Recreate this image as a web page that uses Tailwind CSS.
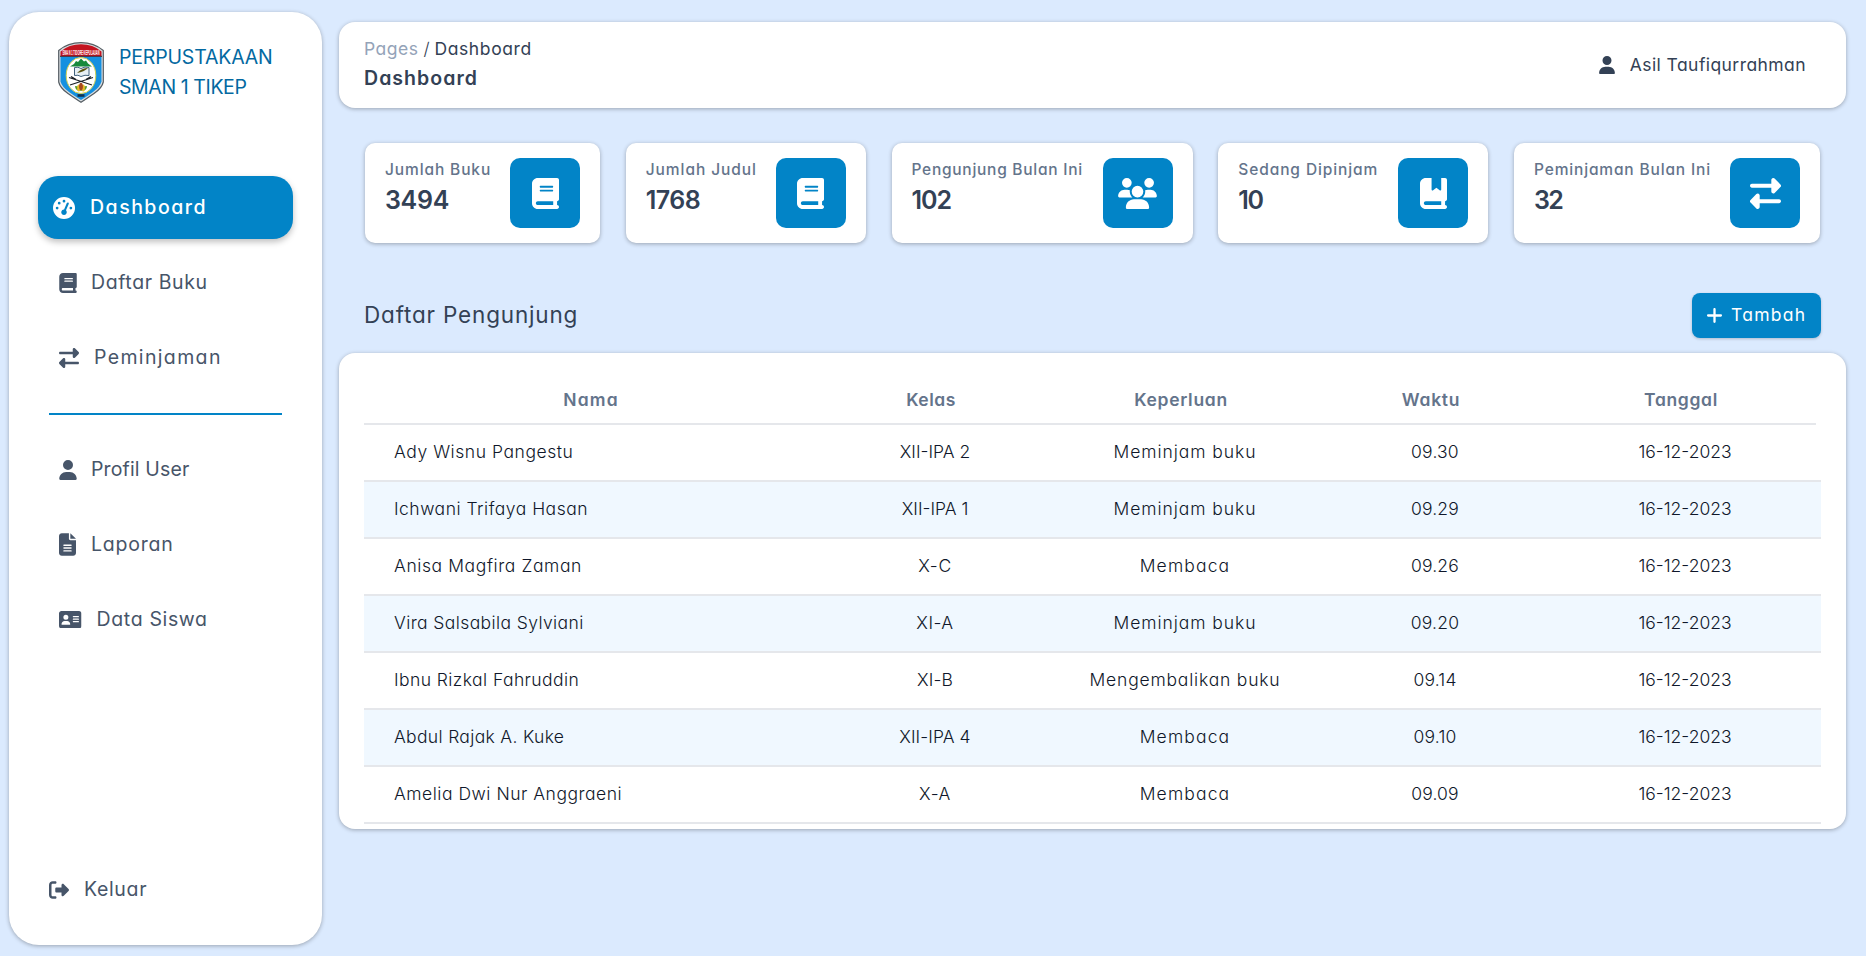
<!DOCTYPE html>
<html lang="id">
<head>
<meta charset="utf-8">
<title>Perpustakaan SMAN 1 TIKEP</title>
<script src="https://cdn.jsdelivr.net/npm/@tailwindcss/browser@4"></script>
</head>
<body class="h-[956px] w-[1866px] overflow-hidden bg-[#dbeafe] font-['Inter',sans-serif] [font-feature-settings:'cv11'] whitespace-nowrap text-[#334155]">
<svg class="hidden">
  <symbol id="user" viewBox="0 0 448 512"><path d="M224 256A128 128 0 1 0 224 0a128 128 0 1 0 0 256zm-45.7 48C79.8 304 0 383.8 0 482.3C0 498.7 13.3 512 29.7 512l388.6 0c16.4 0 29.7-13.3 29.7-29.7C448 383.8 368.2 304 269.7 304l-91.4 0z"/></symbol>
  <symbol id="book" viewBox="0 0 448 512"><path d="M96 0C43 0 0 43 0 96V416c0 53 43 96 96 96H384h32c17.7 0 32-14.3 32-32s-14.3-32-32-32V384c17.7 0 32-14.3 32-32V32c0-17.7-14.3-32-32-32H384 96zm0 384H352v64H96c-17.7 0-32-14.3-32-32s14.3-32 32-32zm32-240c0-8.8 7.2-16 16-16H336c8.8 0 16 7.2 16 16s-7.2 16-16 16H144c-8.8 0-16-7.2-16-16zm16 48H336c8.8 0 16 7.2 16 16s-7.2 16-16 16H144c-8.8 0-16-7.2-16-16s7.2-16 16-16z"/></symbol>
  <symbol id="bookmark" viewBox="0 0 448 512"><path d="M0 96C0 43 43 0 96 0h96V190.7c0 13.4 15.5 20.9 26 12.5L272 160l54 43.2c10.5 8.4 26 .9 26-12.5V0h32 32c17.7 0 32 14.3 32 32V352c0 17.7-14.3 32-32 32v64c17.7 0 32 14.3 32 32s-14.3 32-32 32H384 96c-53 0-96-43-96-96V96zM64 416c0 17.7 14.3 32 32 32H352V384H96c-17.7 0-32 14.3-32 32z"/></symbol>
  <symbol id="swap" viewBox="0 0 512 512"><path d="M32 96l320 0V32c0-12.9 7.8-24.6 19.8-29.6s25.7-2.2 34.9 6.9l96 96c6 6 9.4 14.1 9.4 22.6s-3.4 16.6-9.4 22.6l-96 96c-9.2 9.2-22.9 11.9-34.9 6.9s-19.8-16.6-19.8-29.6V160L32 160c-17.7 0-32-14.3-32-32s14.3-32 32-32zM480 352c17.7 0 32 14.3 32 32s-14.3 32-32 32H160v64c0 12.9-7.8 24.6-19.8 29.6s-25.7 2.2-34.9-6.9l-96-96c-6-6-9.4-14.1-9.4-22.6s3.4-16.6 9.4-22.6l96-96c9.2-9.2 22.9-11.9 34.9-6.9s19.8 16.6 19.8 29.6l0 64H480z"/></symbol>
  <symbol id="users" viewBox="0 0 640 512"><path d="M144 0a80 80 0 1 1 0 160A80 80 0 1 1 144 0zM512 0a80 80 0 1 1 0 160A80 80 0 1 1 512 0zM0 298.7C0 239.8 47.8 192 106.7 192h42.7c15.9 0 31 3.5 44.6 9.7c-1.3 7.2-1.9 14.7-1.9 22.3c0 38.2 16.8 72.5 43.3 96c-.2 0-.4 0-.7 0H21.3C9.6 320 0 310.4 0 298.7zM405.3 320c-.2 0-.4 0-.7 0c26.6-23.5 43.3-57.8 43.3-96c0-7.6-.7-15-1.9-22.3c13.6-6.3 28.7-9.7 44.6-9.7h42.7C592.2 192 640 239.8 640 298.7c0 11.8-9.6 21.3-21.3 21.3H405.3zM224 224a96 96 0 1 1 192 0 96 96 0 1 1-192 0zM128 485.3C128 411.7 187.7 352 261.3 352H378.7C452.3 352 512 411.7 512 485.3c0 14.7-11.9 26.7-26.7 26.7H154.7c-14.7 0-26.7-11.9-26.7-26.7z"/></symbol>
  <symbol id="file" viewBox="0 0 384 512"><path d="M64 0C28.7 0 0 28.7 0 64V448c0 35.3 28.7 64 64 64H320c35.3 0 64-28.7 64-64V160H256c-17.7 0-32-14.3-32-32V0H64zM256 0V128H384L256 0zM112 256H272c8.8 0 16 7.2 16 16s-7.2 16-16 16H112c-8.8 0-16-7.2-16-16s7.2-16 16-16zm0 64H272c8.8 0 16 7.2 16 16s-7.2 16-16 16H112c-8.8 0-16-7.2-16-16s7.2-16 16-16zm0 64H272c8.8 0 16 7.2 16 16s-7.2 16-16 16H112c-8.8 0-16-7.2-16-16s7.2-16 16-16z"/></symbol>
  <symbol id="card" viewBox="0 32 576 448"><path d="M64 32C28.7 32 0 60.7 0 96V416c0 35.3 28.7 64 64 64H512c35.3 0 64-28.7 64-64V96c0-35.3-28.7-64-64-64H64zm80 256h64c44.2 0 80 35.8 80 80c0 8.8-7.2 16-16 16H80c-8.8 0-16-7.2-16-16c0-44.2 35.8-80 80-80zm-32-96a64 64 0 1 1 128 0 64 64 0 1 1-128 0zm256-32H496c8.8 0 16 7.2 16 16s-7.2 16-16 16H368c-8.8 0-16-7.2-16-16s7.2-16 16-16zm0 64H496c8.8 0 16 7.2 16 16s-7.2 16-16 16H368c-8.8 0-16-7.2-16-16s7.2-16 16-16zm0 64H496c8.8 0 16 7.2 16 16s-7.2 16-16 16H368c-8.8 0-16-7.2-16-16s7.2-16 16-16z"/></symbol>
  <symbol id="exit" viewBox="0 0 512 512"><path d="M377.9 105.9L500.7 228.7c7.2 7.2 11.3 17.1 11.3 27.3s-4.1 20.1-11.3 27.3L377.9 406.1c-6.4 6.4-15 9.9-24 9.9c-18.7 0-33.9-15.2-33.9-33.9l0-62.1-128 0c-17.7 0-32-14.3-32-32l0-64c0-17.7 14.3-32 32-32l128 0 0-62.1c0-18.7 15.2-33.9 33.9-33.9c9 0 17.6 3.6 24 9.9zM160 96L96 96c-17.7 0-32 14.3-32 32l0 256c0 17.7 14.3 32 32 32l64 0c17.7 0 32 14.3 32 32s-14.3 32-32 32l-64 0c-53 0-96-43-96-96L0 128C0 75 43 32 96 32l64 0c17.7 0 32 14.3 32 32s-14.3 32-32 32z"/></symbol>
  <symbol id="plus" viewBox="16 48 416 416"><path d="M256 80c0-17.7-14.3-32-32-32s-32 14.3-32 32V224H48c-17.7 0-32 14.3-32 32s14.3 32 32 32H192V432c0 17.7 14.3 32 32 32s32-14.3 32-32V288H400c17.7 0 32-14.3 32-32s-14.3-32-32-32H256V80z"/></symbol>
  <symbol id="gauge" viewBox="0 0 512 512"><path d="M0 256a256 256 0 1 1 512 0A256 256 0 1 1 0 256zM288 96a32 32 0 1 0 -64 0 32 32 0 1 0 64 0zM256 416c35.3 0 64-28.7 64-64c0-17.4-6.9-33.1-18.1-44.6L366 161.7c5.3-12.1-.2-26.3-12.3-31.6s-26.3 .2-31.6 12.3L257.9 288c-.6 0-1.3 0-1.9 0c-35.3 0-64 28.7-64 64s28.7 64 64 64zM176 144a32 32 0 1 0 -64 0 32 32 0 1 0 64 0zM96 288a32 32 0 1 0 0-64 32 32 0 1 0 0 64zm352-32a32 32 0 1 0 -64 0 32 32 0 1 0 64 0z"/></symbol>
</svg>

<div class="flex h-full">
  <aside class="mt-3 ml-[9px] flex h-[933px] w-[313px] shrink-0 flex-col rounded-[30px] bg-white px-[29px] text-[19.5px] text-[#475569] shadow-[0_1px_4px_rgba(0,0,0,0.3)]">
    <div class="flex h-[164px] shrink-0 items-start gap-[15px] pt-[30px] pl-5 text-[#0369a1]">
      <svg class="h-[61px] w-[46px] shrink-0" viewBox="0 0 46 61">
        <path d="M.7 13V8.500Q10 .7 23 .7T45.300 8.500V40Q44 46 36 51.500T23 60.300Q18 57 10 51.500T.7 40z" fill="#d9dde0" stroke="#555d63" stroke-width="1.200"/>
        <path d="M2.500 14.500H43.500V39.500Q42 45 35 50T23 58Q18 55 11 50T2.500 39.500z" fill="#1490e0"/>
        <path d="M2.500 14V9.500Q11 2.300 23 2.300T43.500 9.500V14z" fill="#c41420"/>
        <path d="M2 14.300H44" stroke="#3a1d28" stroke-width="1"/>
        <text transform="scale(1 3)" x="4.500" y="4.250" textLength="37" lengthAdjust="spacingAndGlyphs" font-family="Liberation Sans" font-weight="700" font-size="2.700" fill="#fff">SMA N 1 TIDORE KEPULAUAN</text>
        <ellipse cx="23" cy="33.500" rx="14.800" ry="18" fill="#fff" stroke="#d5d24e" stroke-width="1"/>
        <path d="M12 24.500L16 22l2-3 2 1 3-3.500 3 3 2-1 2 3 4 3z" fill="#178a3c"/>
        <path d="M16.500 25.500Q20 24.500 23 26.500 27 24 31 25.500V33.500Q27 32.500 23 34.500 20 32.500 16.500 33.500z" fill="#e7f0f5" stroke="#41617c" stroke-width="1"/>
        <path d="M19 31Q24 26 30 26 26 30 19 31z" fill="#59520f"/>
        <path d="M11 35.500L34 43M35 35.500L12 43M13 34.500l5 3M33 34.500l-5 3" stroke="#1b2026" stroke-width="1.300"/>
        <path d="M17 44q5 0 6 5-6 0-6-5zM29 44q-5 0-6 5 6 0 6-5z" fill="#5a9a2a"/>
        <ellipse cx="20.800" cy="46" rx="1.700" ry="3.500" fill="#e7b928"/><ellipse cx="25.200" cy="46" rx="1.700" ry="3.500" fill="#e7b928"/>
        <ellipse cx="23" cy="44.500" rx="1.900" ry="3.800" fill="#a5481f"/>
        <path d="M19.500 53.500h7" stroke="#12324f" stroke-width="2.600"/>
      </svg>
      <div class="leading-[30px]"><div><span class="tracking-[-0.17px]">PERPUSTAKAAN</span></div><div><span class="tracking-[-0.4px]">SMAN 1 TIKEP</span></div></div>
    </div>
    <nav class="flex flex-1 flex-col">
      <a class="flex h-[63px] shrink-0 items-center gap-[15px] rounded-[20px] bg-[#0284c7] pl-[15px] font-medium text-white shadow-[0_3px_6px_rgba(0,0,0,0.25)]"><svg class="size-[22px] fill-current"><use href="#gauge"/></svg><span class="tracking-[1.5px]">Dashboard</span></a>
      <a class="mt-3 flex h-[63px] items-center gap-[14px] pl-[21px]"><svg class="h-5 w-[18px] fill-current"><use href="#book"/></svg><span class="tracking-[0.6px]">Daftar Buku</span></a>
      <a class="mt-3 flex h-[63px] items-center gap-[15px] pl-[21px]"><svg class="size-5 fill-current"><use href="#swap"/></svg><span class="tracking-[1.35px]">Peminjaman</span></a>
      <div class="mx-[11px] mt-6 mb-[23px] h-0.5 w-[233px] shrink-0 bg-[#0284c7]"></div>
      <a class="flex h-[63px] items-center gap-[14px] pl-[21px]"><svg class="h-5 w-[18px] fill-current"><use href="#user"/></svg><span class="tracking-[0.15px]">Profil User</span></a>
      <a class="mt-3 flex h-[63px] items-center gap-[15px] pl-[21px]"><svg class="h-[23px] w-[17px] fill-current"><use href="#file"/></svg><span class="tracking-[0.8px]">Laporan</span></a>
      <a class="mt-3 flex h-[63px] items-center gap-[15px] pl-[21px]"><svg class="h-[17.500px] w-[22.500px] fill-current"><use href="#card"/></svg><span class="tracking-[0.65px]">Data Siswa</span></a>
      <a class="mt-auto mb-6 flex h-[63px] items-center gap-[15px] pl-[11px]"><svg class="size-5 fill-current"><use href="#exit"/></svg><span class="tracking-[0.65px]">Keluar</span></a>
    </nav>
  </aside>

  <main class="mt-[22px] ml-[17px] w-[1507px]">
    <header class="flex h-[86px] items-center justify-between rounded-2xl bg-white pr-[40px] pl-[25px] shadow-[0_1px_4px_rgba(0,0,0,0.3)]">
      <div class="-mt-[3px]">
        <div class="text-[17.500px] leading-[28px]"><span class="tracking-[0.5px] text-[#94a3b8]">Pages</span> <span class="font-light">/</span> <span class="tracking-[0.62px]">Dashboard</span></div>
        <div class="text-[19.500px] leading-[30px] font-semibold"><span class="tracking-[1.05px]">Dashboard</span></div>
      </div>
      <div class="flex items-center gap-[15px] text-[17.500px]"><svg class="h-[18px] w-4 fill-current"><use href="#user"/></svg><span class="tracking-[0.43px]">Asil Taufiqurrahman</span></div>
    </header>

    <section class="mt-[35px] mr-[26px] ml-[26px] flex h-[100px] justify-between">
      <div class="flex w-[235px] justify-between rounded-[10px] bg-white px-5 py-[15px] shadow-[0_1px_4px_rgba(0,0,0,0.3)]"><div><div class="text-[15.500px] leading-6 font-medium text-[#64748b]"><span class="tracking-[0.88px]">Jumlah Buku</span></div><div class="text-[25px] leading-9 font-semibold"><span class="tracking-[-0.3px]">3494</span></div></div><div class="flex size-[70px] items-center justify-center rounded-[10px] bg-[#0284c7]"><svg class="h-[31px] w-[27px] fill-white"><use href="#book"/></svg></div></div>
      <div class="flex w-[240px] justify-between rounded-[10px] bg-white px-5 py-[15px] shadow-[0_1px_4px_rgba(0,0,0,0.3)]"><div><div class="text-[15.500px] leading-6 font-medium text-[#64748b]"><span class="tracking-[0.93px]">Jumlah Judul</span></div><div class="text-[25px] leading-9 font-semibold"><span class="tracking-[-0.5px]">1768</span></div></div><div class="flex size-[70px] items-center justify-center rounded-[10px] bg-[#0284c7]"><svg class="h-[31px] w-[27px] fill-white"><use href="#book"/></svg></div></div>
      <div class="flex w-[301px] justify-between rounded-[10px] bg-white px-5 py-[15px] shadow-[0_1px_4px_rgba(0,0,0,0.3)]"><div><div class="text-[15.500px] leading-6 font-medium text-[#64748b]"><span class="tracking-[0.73px]">Pengunjung Bulan Ini</span></div><div class="text-[25px] leading-9 font-semibold"><span class="tracking-[-1px]">102</span></div></div><div class="flex size-[70px] items-center justify-center rounded-[10px] bg-[#0284c7]"><svg class="h-[31px] w-[39px] fill-white"><use href="#users"/></svg></div></div>
      <div class="flex w-[270px] justify-between rounded-[10px] bg-white px-5 py-[15px] shadow-[0_1px_4px_rgba(0,0,0,0.3)]"><div><div class="text-[15.500px] leading-6 font-medium text-[#64748b]"><span class="tracking-[0.9px]">Sedang Dipinjam</span></div><div class="text-[25px] leading-9 font-semibold"><span class="tracking-[-1.2px]">10</span></div></div><div class="flex size-[70px] items-center justify-center rounded-[10px] bg-[#0284c7]"><svg class="h-[31px] w-[27px] fill-white"><use href="#bookmark"/></svg></div></div>
      <div class="flex w-[306px] justify-between rounded-[10px] bg-white px-5 py-[15px] shadow-[0_1px_4px_rgba(0,0,0,0.3)]"><div><div class="text-[15.500px] leading-6 font-medium text-[#64748b]"><span class="tracking-[0.84px]">Peminjaman Bulan Ini</span></div><div class="text-[25px] leading-9 font-semibold"><span class="tracking-[-1.7px]">32</span></div></div><div class="flex size-[70px] items-center justify-center rounded-[10px] bg-[#0284c7]"><svg class="size-[31px] fill-white"><use href="#swap"/></svg></div></div>
    </section>

    <div class="mt-[50px] mr-[25px] ml-[25px] flex h-[45px] items-center justify-between">
      <h2 class="-mt-[2px] text-[22.500px] tracking-[0.82px]">Daftar Pengunjung</h2>
      <button class="flex h-[45px] w-[129px] items-center gap-[9px] rounded-lg bg-[#0284c7] pl-[15px] text-[17.500px] text-white shadow-[0_1px_3px_rgba(0,0,0,0.2)]"><svg class="size-[15px] fill-current"><use href="#plus"/></svg><span class="tracking-[1.25px]">Tambah</span></button>
    </div>

    <section class="mt-[15px] h-[476px] overflow-hidden rounded-2xl bg-white px-[25px] pt-[20px] text-center text-[17.500px] shadow-[0_1px_4px_rgba(0,0,0,0.3)]">
      <div class="mr-[5px] grid h-[52px] grid-cols-[442px_250px_250px_250px_250px] items-center border-b-2 border-[#e5e7eb] pt-1 font-semibold text-[#64748b]">
        <div class="pl-[12px]"><span class="tracking-[1.2px]">Nama</span></div><div><span class="tracking-[0.5px]">Kelas</span></div><div><span class="tracking-[0.7px]">Keperluan</span></div><div><span class="tracking-[0.75px]">Waktu</span></div><div><span class="tracking-[0.68px]">Tanggal</span></div>
      </div>
      <div class="font-light text-[#0f172a]">
        <div class="grid h-[57px] grid-cols-[446px_250px_250px_250px_250px] items-center border-b-2 border-[#e5e7eb]"><div class="pl-[30px] text-left"><span class="tracking-[0.55px]">Ady Wisnu Pangestu</span></div><div><span>XII-IPA 2</span></div><div><span class="tracking-[0.94px]">Meminjam buku</span></div><div><span class="tracking-[0.2px]">09.30</span></div><div><span>16-12-2023</span></div></div>
        <div class="grid h-[57px] grid-cols-[446px_250px_250px_250px_250px] items-center border-b-2 border-[#e5e7eb] bg-[#f0f8ff]"><div class="pl-[30px] text-left"><span class="tracking-[0.5px]">Ichwani Trifaya Hasan</span></div><div><span>XII-IPA 1</span></div><div><span class="tracking-[0.94px]">Meminjam buku</span></div><div><span class="tracking-[0.2px]">09.29</span></div><div><span>16-12-2023</span></div></div>
        <div class="grid h-[57px] grid-cols-[446px_250px_250px_250px_250px] items-center border-b-2 border-[#e5e7eb]"><div class="pl-[30px] text-left"><span class="tracking-[0.6px]">Anisa Magfira Zaman</span></div><div><span class="tracking-[0.7px]">X-C</span></div><div><span class="tracking-[1.15px]">Membaca</span></div><div><span class="tracking-[0.2px]">09.26</span></div><div><span>16-12-2023</span></div></div>
        <div class="grid h-[57px] grid-cols-[446px_250px_250px_250px_250px] items-center border-b-2 border-[#e5e7eb] bg-[#f0f8ff]"><div class="pl-[30px] text-left"><span class="tracking-[0.4px]">Vira Salsabila Sylviani</span></div><div><span class="tracking-[0.5px]">XI-A</span></div><div><span class="tracking-[0.94px]">Meminjam buku</span></div><div><span class="tracking-[0.2px]">09.20</span></div><div><span>16-12-2023</span></div></div>
        <div class="grid h-[57px] grid-cols-[446px_250px_250px_250px_250px] items-center border-b-2 border-[#e5e7eb]"><div class="pl-[30px] text-left"><span class="tracking-[0.43px]">Ibnu Rizkal Fahruddin</span></div><div><span class="tracking-[0.14px]">XI-B</span></div><div><span class="tracking-[0.81px]">Mengembalikan buku</span></div><div><span class="tracking-[0.2px]">09.14</span></div><div><span>16-12-2023</span></div></div>
        <div class="grid h-[57px] grid-cols-[446px_250px_250px_250px_250px] items-center border-b-2 border-[#e5e7eb] bg-[#f0f8ff]"><div class="pl-[30px] text-left"><span class="tracking-[0.33px]">Abdul Rajak A. Kuke</span></div><div><span class="tracking-[0.08px]">XII-IPA 4</span></div><div><span class="tracking-[1.15px]">Membaca</span></div><div><span class="tracking-[0.2px]">09.10</span></div><div><span>16-12-2023</span></div></div>
        <div class="grid h-[57px] grid-cols-[446px_250px_250px_250px_250px] items-center border-b-2 border-[#e5e7eb]"><div class="pl-[30px] text-left"><span class="tracking-[0.52px]">Amelia Dwi Nur Anggraeni</span></div><div><span class="tracking-[0.6px]">X-A</span></div><div><span class="tracking-[1.15px]">Membaca</span></div><div><span class="tracking-[0.2px]">09.09</span></div><div><span>16-12-2023</span></div></div>
      </div>
    </section>
  </main>
</div>
</body>
</html>
